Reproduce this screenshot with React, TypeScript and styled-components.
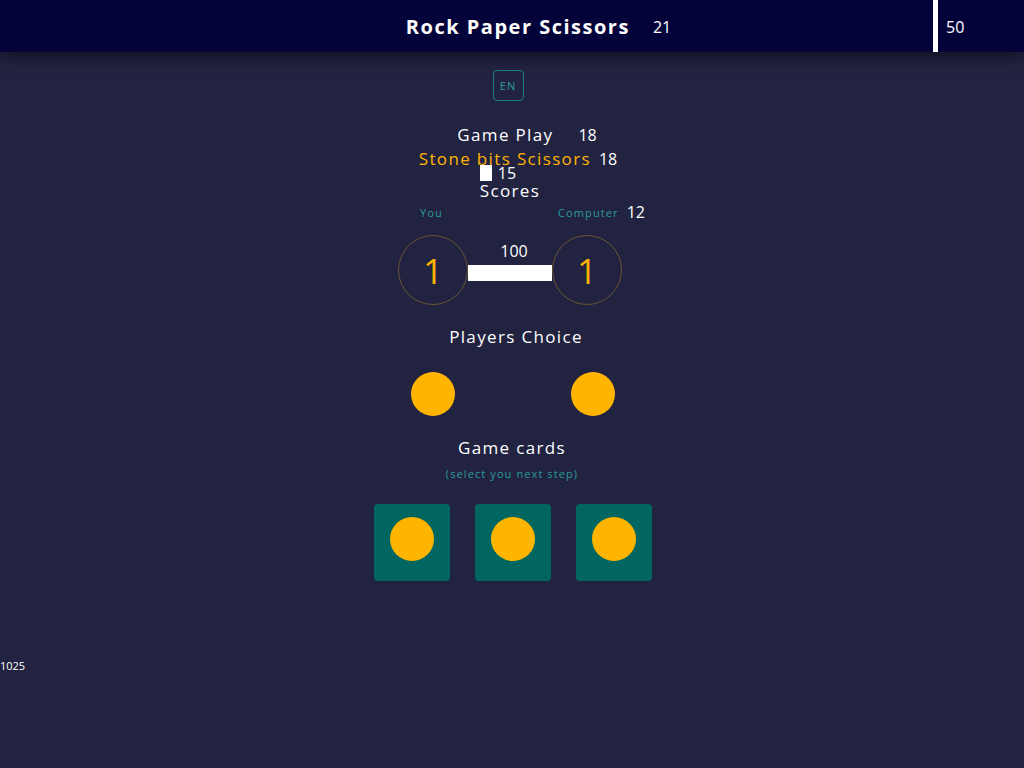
import React from "react";
import styled, { createGlobalStyle } from "styled-components";

const Global = createGlobalStyle`
  html, body { margin: 0; padding: 0; background: #212340; }
  body { font-family: "Open Sans", "Liberation Sans", sans-serif; color: #ffffff; }
  * { box-sizing: border-box; }
`;

const Page = styled.div`
  min-height: 768px;
  background: #212340;
`;

const Header = styled.header`
  height: 52px;
  display: flex;
  align-items: stretch;
  background: #03033a;
  box-shadow: 0 4px 14px rgba(0, 0, 0, 0.55);
`;

const HeaderCenter = styled.div`
  flex: 1;
  display: flex;
  align-items: center;
  justify-content: center;
  gap: 23px;
  padding-left: 144px;
`;

const Title = styled.h1`
  margin: 0;
  font-size: 20px;
  font-weight: 700;
  letter-spacing: 1.5px;
`;

const HeaderNum = styled.span`
  font-size: 16px;
  padding-top: 2px;
`;

const HeaderSide = styled.div`
  width: 91px;
  border-left: 5px solid #ffffff;
  display: flex;
  align-items: center;
  padding-left: 8px;
`;

const Main = styled.main`
  display: flex;
  flex-direction: column;
  align-items: center;
  padding-top: 18px;
`;

const LangButton = styled.button`
  width: 31px;
  height: 31px;
  border: 1px solid #1f7f80;
  border-radius: 4px;
  background: transparent;
  color: #2a9c9c;
  font-family: inherit;
  font-size: 11px;
  letter-spacing: 1px;
  padding: 0;
  margin-bottom: 22px;
  margin-right: 8px;
`;

const Row = styled.div<{ $shift?: number; $gap?: number }>`
  display: flex;
  align-items: center;
  gap: ${(p) => p.$gap ?? 8}px;
  margin-left: ${(p) => p.$shift ?? 0}px;
`;

const Heading = styled.span<{ $accent?: boolean }>`
  font-size: 17px;
  letter-spacing: 1.35px;
  line-height: 24px;
  color: ${(p) => (p.$accent ? "#ffb300" : "#ffffff")};
`;

const Num = styled.span`
  font-size: 16px;
  line-height: 20px;
`;

const ScoreBlock = styled.div<{ $shift?: number }>`
  display: flex;
  flex-direction: column;
  align-items: flex-start;
  margin-left: ${(p) => p.$shift ?? 0}px;
`;

const Square = styled.span`
  display: inline-block;
  width: 12px;
  height: 16px;
  background: #ffffff;
`;

const PlayersRow = styled.div`
  width: 225px;
  margin-left: 41px;
  margin-top: -1px;
  display: flex;
  align-items: center;
  justify-content: space-between;
`;

const Small = styled.span`
  font-size: 11px;
  letter-spacing: 1.1px;
  color: #2a9c9c;
`;

const CircleRow = styled.div`
  display: flex;
  align-items: center;
  margin-left: -4px;
  margin-top: 13px;
`;

const ScoreCircle = styled.div`
  width: 70px;
  height: 70px;
  border-radius: 50%;
  border: 1px solid #6b5630;
  display: flex;
  align-items: center;
  justify-content: center;
  color: #ffb300;
  font-size: 35px;
  line-height: 1;
`;

const BarColumn = styled.div`
  align-self: flex-end;
  margin-bottom: 24px;
  display: flex;
  flex-direction: column;
  align-items: center;
  gap: 4px;
`;

const BarLabel = styled.span`
  font-size: 16px;
  line-height: 20px;
  margin-left: 8px;
`;

const Bar = styled.div`
  width: 84px;
  height: 16px;
  background: #ffffff;
`;

const Section = styled.div<{ $top: number; $shift?: number }>`
  margin-top: ${(p) => p.$top}px;
  margin-left: ${(p) => p.$shift ?? 0}px;
  display: flex;
  flex-direction: column;
  align-items: center;
`;

const ChoiceRow = styled.div`
  display: flex;
  gap: 116px;
  margin-top: 23px;
  margin-left: 2px;
`;

const Dot = styled.div`
  width: 44px;
  height: 44px;
  border-radius: 50%;
  background: #ffb500;
`;

const Hint = styled(Small)`
  margin-top: 6px;
`;

const Cards = styled.div`
  display: flex;
  gap: 25px;
  margin-top: 23px;
  margin-left: 1px;
`;

const Card = styled.button`
  width: 76px;
  height: 77px;
  border: none;
  border-radius: 4px;
  background: #00665f;
  display: flex;
  justify-content: center;
  align-items: flex-start;
  padding: 13px 0 0;
`;

const Footer = styled.div`
  font-size: 11px;
  margin-top: 77px;
`;

export default function App() {
  return (
    <Page>
      <Global />
      <Header>
        <HeaderCenter>
          <Title>Rock Paper Scissors</Title>
          <HeaderNum>21</HeaderNum>
        </HeaderCenter>
        <HeaderSide>
          <HeaderNum>50</HeaderNum>
        </HeaderSide>
      </Header>
      <Main>
        <LangButton>EN</LangButton>
        <Row $shift={30} $gap={25}>
          <Heading>Game Play</Heading>
          <Num>18</Num>
        </Row>
        <Row $shift={12} $gap={8}>
          <Heading $accent>Stone bits Scissors</Heading>
          <Num>18</Num>
        </Row>
        <ScoreBlock $shift={-4}>
          <Row $gap={6} style={{ marginTop: -8 }}>
            <Square />
            <Num>15</Num>
          </Row>
          <Heading style={{ marginTop: -4 }}>Scores</Heading>
        </ScoreBlock>
        <PlayersRow>
          <Small>You</Small>
          <Row $gap={8}>
            <Small>Computer</Small>
            <Num>12</Num>
          </Row>
        </PlayersRow>
        <CircleRow>
          <ScoreCircle>1</ScoreCircle>
          <BarColumn>
            <BarLabel>100</BarLabel>
            <Bar />
          </BarColumn>
          <ScoreCircle>1</ScoreCircle>
        </CircleRow>
        <Section $top={20} $shift={8}>
          <Heading>Players Choice</Heading>
        </Section>
        <ChoiceRow>
          <Dot />
          <Dot />
        </ChoiceRow>
        <Section $top={20}>
          <Heading>Game cards</Heading>
          <Hint>(select you next step)</Hint>
        </Section>
        <Cards>
          <Card><Dot /></Card>
          <Card><Dot /></Card>
          <Card><Dot /></Card>
        </Cards>
      </Main>
      <Footer>1025</Footer>
    </Page>
  );
}
